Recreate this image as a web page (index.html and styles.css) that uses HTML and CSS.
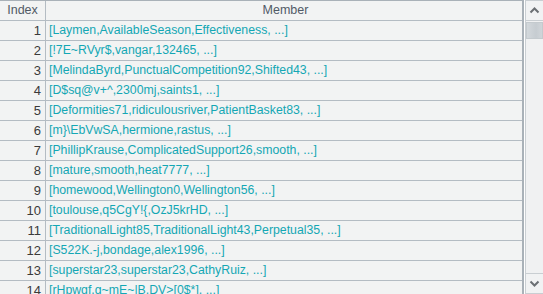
FILE: index.html
```html
<!DOCTYPE html>
<html>
<head>
<meta charset="utf-8">
<link rel="stylesheet" href="styles.css">
</head>
<body>
<div class="frame">
  <div class="grid">
    <div class="row head">
      <div class="c idx">Index</div>
      <div class="c mem">Member</div>
    </div>
    <div class="row"><div class="c idx">1</div><div class="c mem">[Laymen,AvailableSeason,Effectiveness, ...]</div></div>
    <div class="row"><div class="c idx">2</div><div class="c mem">[!7E~RVyr$,vangar,132465, ...]</div></div>
    <div class="row"><div class="c idx">3</div><div class="c mem">[MelindaByrd,PunctualCompetition92,Shifted43, ...]</div></div>
    <div class="row"><div class="c idx">4</div><div class="c mem">[D$sq@v+^,2300mj,saints1, ...]</div></div>
    <div class="row"><div class="c idx">5</div><div class="c mem">[Deformities71,ridiculousriver,PatientBasket83, ...]</div></div>
    <div class="row"><div class="c idx">6</div><div class="c mem">[m}\EbVwSA,hermione,rastus, ...]</div></div>
    <div class="row"><div class="c idx">7</div><div class="c mem">[PhillipKrause,ComplicatedSupport26,smooth, ...]</div></div>
    <div class="row"><div class="c idx">8</div><div class="c mem">[mature,smooth,heat7777, ...]</div></div>
    <div class="row"><div class="c idx">9</div><div class="c mem">[homewood,Wellington0,Wellington56, ...]</div></div>
    <div class="row"><div class="c idx">10</div><div class="c mem">[toulouse,q5CgY!{,OzJ5krHD, ...]</div></div>
    <div class="row"><div class="c idx">11</div><div class="c mem">[TraditionalLight85,TraditionalLight43,Perpetual35, ...]</div></div>
    <div class="row"><div class="c idx">12</div><div class="c mem">[S522K.-j,bondage,alex1996, ...]</div></div>
    <div class="row"><div class="c idx">13</div><div class="c mem">[superstar23,superstar23,CathyRuiz, ...]</div></div>
    <div class="row"><div class="c idx">14</div><div class="c mem">[rHpwgf,g~mE~|B,DV&gt;[0$*], ...]</div></div>
  </div>
  <div class="sbar">
    <div class="sbtn"><svg width="11" height="7" viewBox="0 0 11 7"><path d="M1.5 5.5 L5.5 1.5 L9.5 5.5" fill="none" stroke="#6b6f73" stroke-width="2"/></svg></div>
    <div class="track"><div class="thumb"></div></div>
    <div class="sbtn down"><svg width="11" height="7" viewBox="0 0 11 7"><path d="M1.5 1.5 L5.5 5.5 L9.5 1.5" fill="none" stroke="#6b6f73" stroke-width="2"/></svg></div>
  </div>
</div>
</body>
</html>
```
FILE: styles.css
```css
html, body { margin: 0; padding: 0; }
body { background: #f2f3f3; }
.frame {
  width: 543px;
  height: 294px;
  display: flex;
  overflow: hidden;
  background: #f2f3f3;
  font-family: "Liberation Sans", Arial, sans-serif;
  font-size: 12.3px;
}
.grid {
  width: 522px;
  display: flex;
  flex-direction: column;
  border-top: 1px solid #a9b1b8;
  border-right: 2px solid #a9b1b8;
  flex: none;
}
.row {
  display: flex;
  height: 19px;
  border-bottom: 1px solid #b4bcc3;
  flex: none;
}
.c {
  line-height: 19px;
  white-space: nowrap;
  overflow: hidden;
}
.idx {
  width: 41px;
  padding-right: 4px;
  text-align: right;
  border-right: 1px solid #b4bcc3;
  color: #3a3a3a;
  font-size: 13px;
}
.mem {
  flex: 1;
  padding-left: 3px;
  color: #14a7b4;
}
.head .c {
  color: #515a66;
  text-align: center;
  font-size: 12.5px;
}
.head .idx { width: 45px; padding-right: 0; }
.sbar {
  width: 19px;
  display: flex;
  flex-direction: column;
  border-left: 1px solid #ffffff;
  flex: none;
}
.sbtn {
  height: 19px;
  display: flex;
  align-items: center;
  justify-content: center;
  border: 1px solid #c9ced2;
  background: #f1f2f3;
  flex: none;
}
.track {
  flex: 1;
  background: #f0f1f2;
  border-left: 1px solid #c9ced2;
  border-right: 1px solid #c9ced2;
}
.thumb {
  height: 15px;
  margin-top: 1px;
  background: linear-gradient(to right, #d3d8dc, #c6ccd1 60%, #d0d5d9);
  border: 1px solid #c4cace;
}
```
